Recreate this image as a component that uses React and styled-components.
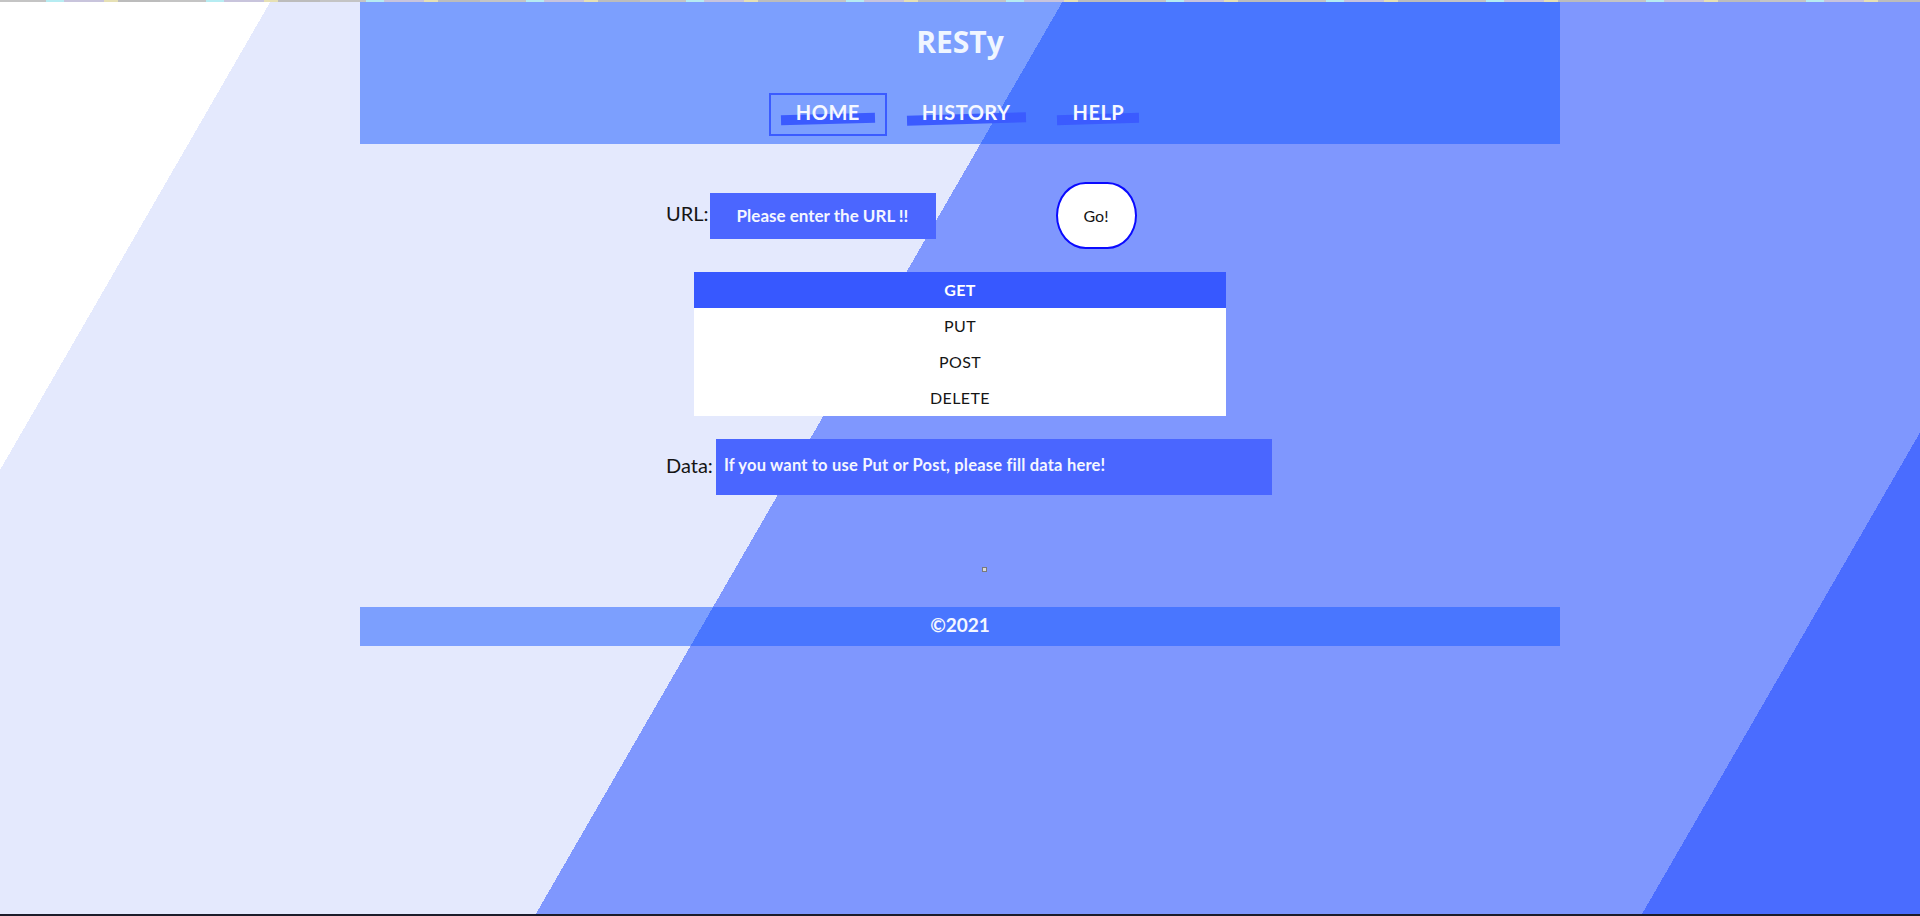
import React, { useState } from 'react'
import styled, { createGlobalStyle } from 'styled-components'

const GlobalStyle = createGlobalStyle`
  html, body {
    margin: 0;
    padding: 0;
  }
  body {
    font-family: 'Lato', 'Noto Sans', sans-serif;
    color: #111;
  }
  * {
    box-sizing: border-box;
  }
`

const METHODS = ['GET', 'PUT', 'POST', 'DELETE']
const LINKS = ['HOME', 'HISTORY', 'HELP']

export default function App() {
  const [method, setMethod] = useState('GET')
  const [active, setActive] = useState('HOME')

  return (
    <Page>
      <GlobalStyle />
      <TopStrip />
      <Header>
        <Title>RESTy</Title>
        <Nav>
          {LINKS.map(l => (
            <NavItem key={l} $active={active === l} onClick={() => setActive(l)}>
              <NavLink>{l}</NavLink>
            </NavItem>
          ))}
        </Nav>
      </Header>

      <Main>
        <Row>
          <FieldLabel>URL:</FieldLabel>
          <UrlInput placeholder="Please enter the URL !!" />
          <GoButton>Go!</GoButton>
        </Row>

        <MethodList>
          {METHODS.map(m => (
            <MethodItem key={m} $selected={method === m} onClick={() => setMethod(m)}>
              {m}
            </MethodItem>
          ))}
        </MethodList>

        <Row>
          <FieldLabel $gap={3}>Data:</FieldLabel>
          <DataArea placeholder="If you want to use Put or Post, please fill data here!" />
        </Row>

        <Result>
          <Loader />
        </Result>
      </Main>

      <Footer>©2021</Footer>
      <Filler />
      <BottomLine />
    </Page>
  )
}

const Page = styled.div`
display: flex;
flex-direction: column;
min-height: 100vh;
background: linear-gradient(
  120deg,
  #ffffff 235px,
  #e4e9fd 235px 921px,
  #7f97fe 921px 1879px,
  #4a6cff 1879px
);
`

const TopStrip = styled.div`
height: 2px;
background: repeating-linear-gradient(
  90deg,
  #c4c4c4 0 46px,
  #b6ecf2 46px 64px,
  #c8c4dc 64px 104px,
  #e6e0b4 104px 118px,
  #bcbcbc 118px 160px
);
`

const Header = styled.header`
width: 1200px;
margin: 0 auto;
display: flex;
flex-direction: column;
align-items: center;
padding: 20px 0 8px;
background-color: rgba(20, 85, 255, 0.5);
`

const Title = styled.h1`
margin: 0;
font-family: 'Open Sans', sans-serif;
font-size: 30px;
font-weight: 700;
line-height: 40px;
color: #f0f6ff;
`

const Nav = styled.ul`
display: flex;
gap: 8px;
margin: 31px 0 0;
padding: 0;
list-style: none;
`

const NavItem = styled.li`
padding: 5px 10px 10px;
border: 2px solid ${p => (p.$active ? '#3b5bff' : 'transparent')};
cursor: pointer;
`

const NavLink = styled.a`
position: relative;
z-index: 0;
display: block;
padding: 0 15px;
font-size: 20px;
font-weight: 700;
letter-spacing: 0.5px;
line-height: 24px;
color: #f6f8ff;

&::before {
  content: '';
  position: absolute;
  left: 0;
  right: 0;
  bottom: 0;
  height: 10px;
  z-index: -1;
  background: #3b5bff;
  transform: rotate(-1.6deg);
}
`

const Main = styled.main`
width: 1200px;
margin: 0 auto;
display: flex;
flex-direction: column;
padding-top: 38px;
`

const Row = styled.div`
display: flex;
align-items: center;
margin-left: 306px;
`

const FieldLabel = styled.label`
font-size: 20px;
color: #151515;
margin-right: ${p => p.$gap ?? 1}px;
margin-bottom: 5px;
`

const UrlInput = styled.input`
width: 226px;
height: 46px;
border: none;
outline: none;
background: #4b66ff;
color: #fff;
font-family: 'Lato', sans-serif;
font-size: 17px;
font-weight: 700;
text-align: center;

&::placeholder {
  color: #f4f6ff;
  opacity: 1;
}
`

const GoButton = styled.button`
width: 81px;
height: 67px;
margin-left: 120px;
border: 2px solid #0a0aff;
border-radius: 30px / 34px;
background: #fff;
font-family: 'Lato', sans-serif;
font-size: 16px;
color: #151515;
cursor: pointer;
`

const MethodList = styled.ul`
align-self: center;
width: 532px;
margin: 23px 0;
padding: 0;
list-style: none;
background: #fff;
`

const MethodItem = styled.li`
height: 36px;
line-height: 36px;
text-align: center;
font-size: 16px;
letter-spacing: 0.4px;
cursor: pointer;
color: ${p => (p.$selected ? '#fff' : '#151515')};
background: ${p => (p.$selected ? '#3758ff' : 'transparent')};
font-weight: ${p => (p.$selected ? 700 : 400)};
`

const DataArea = styled.textarea`
width: 556px;
height: 56px;
padding: 16px 8px 0;
border: none;
outline: none;
resize: none;
background: #4a66ff;
color: #fff;
font-family: 'Lato', sans-serif;
font-size: 16.5px;
font-weight: 700;
letter-spacing: 0.2px;

&::placeholder {
  color: #f4f6ff;
  opacity: 1;
}
`

const Result = styled.section`
display: flex;
justify-content: center;
padding: 72px 0 35px 48px;
`

const Loader = styled.span`
display: block;
width: 5px;
height: 5px;
border: 1px solid #7a7a7a;
background: #d8d8d8;
`

const Footer = styled.footer`
width: 1200px;
margin: 0 auto;
padding: 6px 0 10px;
text-align: center;
font-size: 19px;
font-weight: 700;
line-height: 23px;
color: #f4f7ff;
background-color: rgba(20, 85, 255, 0.5);
`

const Filler = styled.div`
flex: 1;
`

const BottomLine = styled.div`
height: 2px;
background: #1c1c2a;
`
